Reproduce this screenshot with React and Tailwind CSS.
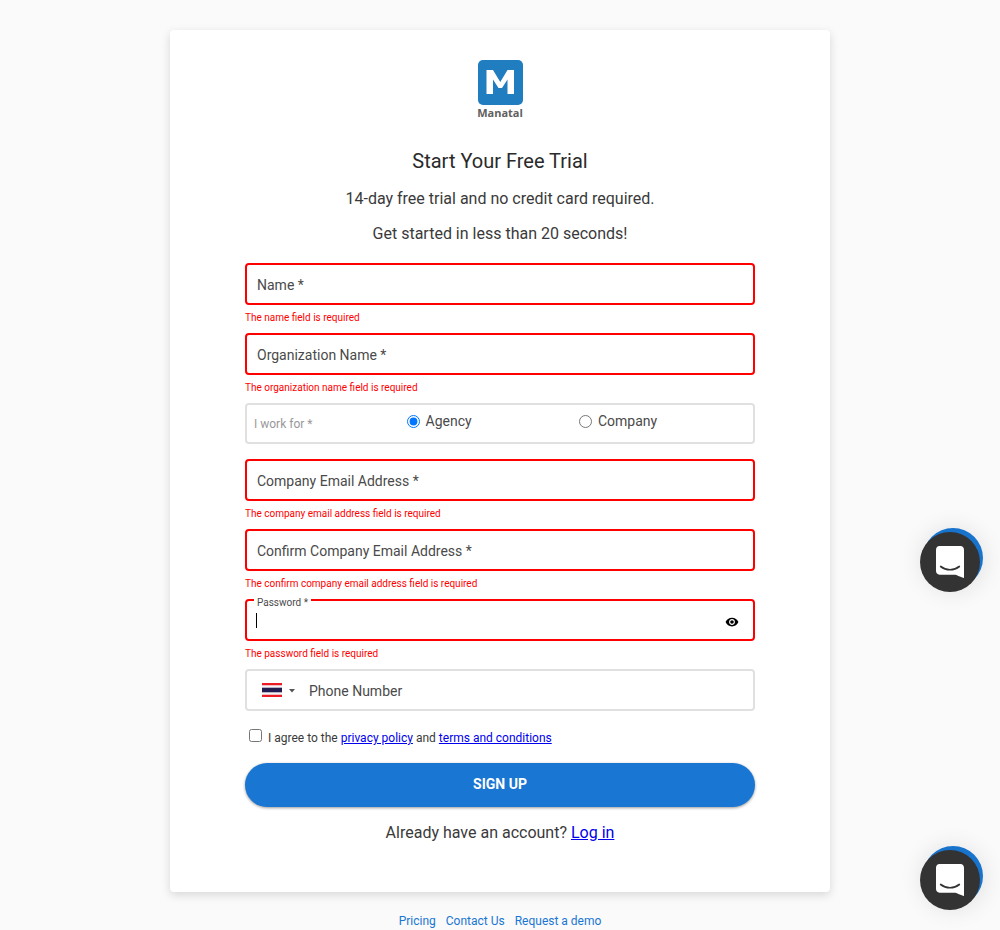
import React from "react";

function Field({ label, error, children }) {
  return (
    <div className="h-[70px]">
      <div className="relative flex h-[42px] items-center rounded-[4px] border-2 border-[#ff0000] px-[10px] text-[14px] text-[#4a4a4a]">
        {label && <span className="pt-[2px]">{label}</span>}
        {children}
      </div>
      <p className="pt-[6px] text-[10px] leading-[14px] text-[#ff0000]">{error}</p>
    </div>
  );
}

function Launcher() {
  return (
    <div className="relative h-[64px] w-[63px]">
      <div className="absolute top-0 right-0 size-[60px] rounded-full bg-[#1873cd] shadow-[0_2px_24px_rgba(0,0,0,0.12)]" />
      <div className="absolute bottom-0 left-0 flex size-[60px] items-center justify-center rounded-full bg-[#333333]">
        <svg width="28" height="32" viewBox="0 0 28 32" fill="none">
          <path d="M28 32s-4.714-1.855-8.527-3.34H3.437C1.54 28.66 0 27.026 0 25.013V3.644C0 1.633 1.54 0 3.437 0h21.125c1.898 0 3.437 1.632 3.437 3.645v18.404H28V32z" fill="#fff" />
          <path d="M4.7 20.5c5.3 4.35 13.3 4.35 18.6 0" stroke="#333333" strokeWidth="1.7" strokeLinecap="round" />
        </svg>
      </div>
    </div>
  );
}

export default function App() {
  return (
    <div className="relative h-[930px] overflow-hidden bg-[#fafafa] pt-[30px] font-['Roboto',sans-serif] text-[#3a3a3a]">
      <main className="mx-auto flex h-[862px] w-[660px] flex-col rounded-[4px] bg-white px-[75px] pt-[30px] shadow-[0_3px_10px_rgba(0,0,0,0.14)]">
        <div className="flex h-[60px] flex-col items-center">
          <svg className="shrink-0" width="45" height="45" viewBox="0 0 45 45">
            <rect width="45" height="45" rx="5" fill="#207dc0" />
            <path d="M8.500 34V10h6.500l7.250 12L29.500 10H36v24h-6.500V19.500l-5.500 8.500h-3.500L15 19.500V34z" fill="#fff" />
          </svg>
          <span className="shrink-0 font-['Open_Sans',sans-serif] text-[11px] leading-[16px] font-bold text-[#606060]">Manatal</span>
        </div>
        <h1 className="mt-[25px] text-center text-[20px] leading-[32px] text-[#2a2a2a]">Start Your Free Trial</h1>
        <p className="mt-[10px] text-center text-[16px] leading-[24px]">14-day free trial and no credit card required.</p>
        <p className="mt-[11px] text-center text-[16px] leading-[24px]">Get started in less than 20 seconds!</p>

        <div className="mt-[17px]">
          <Field label="Name *" error="The name field is required" />
          <Field label="Organization Name *" error="The organization name field is required" />
          <div className="mb-[15px] flex h-[41px] items-start rounded-[4px] border-2 border-[#e0e0e0] pl-[7px] text-[14px] leading-[20px] text-[#4a4a4a]">
            <span className="w-[153px] pt-[9px] text-[12px] text-[#999999]">I work for *</span>
            <label className="flex w-[172px] items-center pt-[6px]">
              <input type="radio" name="kind" defaultChecked className="mr-[5.500px] size-[13px]" />
              Agency
            </label>
            <label className="flex items-center pt-[6px]">
              <input type="radio" name="kind" className="mr-[6px] size-[13px]" />
              Company
            </label>
          </div>
          <Field label="Company Email Address *" error="The company email address field is required" />
          <Field label="Confirm Company Email Address *" error="The confirm company email address field is required" />
          <Field error="The password field is required">
            <span className="absolute -top-[5px] left-[7px] bg-white px-[3px] text-[10px] leading-[14px]">Password *</span>
            <span className="-ml-px h-[15px] w-px bg-black" />
            <svg className="mt-[3px] mr-[4px] ml-auto" width="14" height="14" viewBox="0 0 24 24" fill="#000000">
              <path d="M12 4.500C7 4.500 2.730 7.610 1 12c1.730 4.390 6 7.500 11 7.500s9.270-3.110 11-7.500c-1.730-4.390-6-7.500-11-7.500zM12 17c-2.760 0-5-2.240-5-5s2.240-5 5-5 5 2.240 5 5-2.240 5-5 5zm0-8c-1.660 0-3 1.340-3 3s1.340 3 3 3 3-1.340 3-3-1.340-3-3-3z" />
            </svg>
          </Field>
          <div className="flex h-[42px] items-center rounded-[4px] border-2 border-[#e0e0e0] pl-[15px] text-[14px] text-[#4a4a4a]">
            <svg width="20" height="14" viewBox="0 0 20 14">
              <rect width="20" height="14" fill="#f4f5f8" />
              <path d="M0 0h20v2.300H0zM0 11.700h20V14H0z" fill="#ed1c24" />
              <path d="M0 4.700h20v4.600H0z" fill="#241d4f" />
            </svg>
            <svg className="mt-px ml-[7px]" width="6" height="4" viewBox="0 0 6 4">
              <path d="M0 0h6L3 3.500z" fill="#555555" />
            </svg>
            <span className="ml-[14px] pt-[2px]">Phone Number</span>
          </div>
        </div>

        <div className="mt-[17px] flex h-[20px] items-start pl-[4px] text-[12px] leading-[20px]">
          <input type="checkbox" className="mt-px mr-[6px] size-[13px]" />
          <span>
            I agree to the <a className="text-[#0000ee] underline">privacy policy</a> and <a className="text-[#0000ee] underline">terms and conditions</a>
          </span>
        </div>
        <button className="mt-[15px] h-[44px] shrink-0 rounded-full bg-[#1976d2] pb-[2px] text-[14px] font-bold text-white shadow-[0_1px_3px_rgba(0,0,0,0.4)]">SIGN UP</button>
        <p className="mt-[14px] text-center text-[16px] leading-[24px]">
          Already have an account? <a className="text-[#0000ee] underline">Log in</a>
        </p>
      </main>
      <footer className="mt-[19px] flex justify-center gap-[10px] text-[12px] leading-[20px] text-[#1976d2]">
        <a>Pricing</a>
        <a>Contact Us</a>
        <a>Request a demo</a>
      </footer>
      <div className="absolute top-[528px] right-[17px] flex flex-col gap-[254px]">
        <Launcher />
        <Launcher />
      </div>
    </div>
  );
}
